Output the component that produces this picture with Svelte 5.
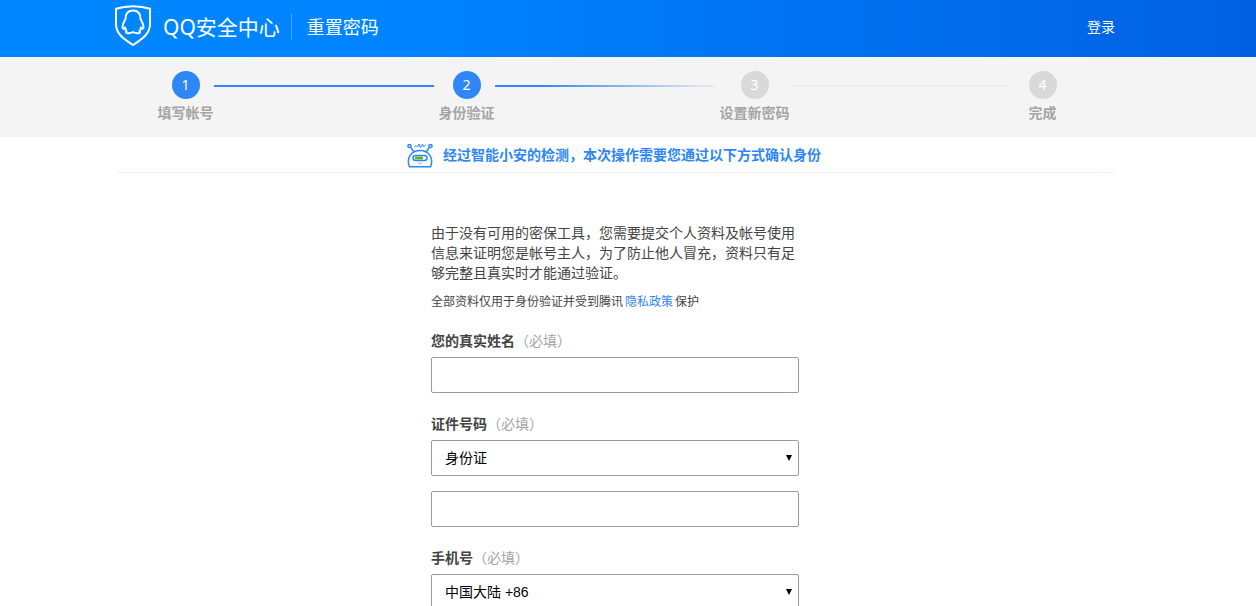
<script>
  const steps = ["填写帐号", "身份验证", "设置新密码", "完成"];
  const current = 2;

  let realName = $state("");
  let idType = $state("id");
  let idNumber = $state("");
  let area = $state("86");
</script>

<header class="header">
  <div class="wrap header-inner">
    <svg class="shield" viewBox="0 0 36 41" aria-hidden="true">
      <path d="M1 3.8C11 0.3 25 0.3 35 3.8V19C35 28 29 33 18 40C7 33 1 28 1 19Z" />
      <path
        d="M10.5 14C10.5 8.500 13.500 5.500 18 5.500S25.500 8.500 25.500 14C27 17 28.500 19 28.500 22C28.500 24 27 24.500 26 22.500C25.800 24 25.200 25 24.500 26C27 28.500 21 29 18 27C15 29 9 28.500 11.500 26C10.800 25 10.200 24 10 22.500C9 24.500 7.500 24 7.500 22C7.500 19 9 17 10.500 14Z"
      />
    </svg>
    <a class="brand" href="#home">QQ安全中心</a>
    <h1 class="title">重置密码</h1>
    <a class="login" href="#login">登录</a>
  </div>
</header>

<div class="progress">
  <ol class="wrap steps">
    {#each steps as step, i}
      <li class="step" class:active={i < current}>
        <span class="num">{i + 1}</span>
        <span>{step}</span>
      </li>
      {#if i < steps.length - 1}
        <li class="line" class:done={i + 1 < current} class:half={i + 1 === current} aria-hidden="true"></li>
      {/if}
    {/each}
  </ol>
</div>

<main class="wrap">
  <h2 class="tip">
    <svg class="robot" viewBox="0 0 26 26" aria-hidden="true">
      <path d="M2.5 24.800C-1 16 4 8.500 13 8.500S27 16 23.500 24.800Z" />
      <path d="M6.500 9.500L4 5.500M19.500 9.500L22 5.500" />
      <path class="hair" d="M7.500 4.500L9 3.500L10.500 5L12 2L13.500 5.500L15.500 2L16.500 4.500L18.500 3.500" />
      <circle cx="2.500" cy="4" r="1.600" />
      <circle cx="23.500" cy="4" r="1.600" />
      <rect x="6" y="13.500" width="14" height="5" rx="2.500" />
      <path class="eyes" d="M8 16H16" />
      <path class="mouth" d="M11 21.500H15" />
    </svg>
    经过智能小安的检测，本次操作需要您通过以下方式确认身份
  </h2>

  <form class="form">
    <p class="intro">
      由于没有可用的密保工具，您需要提交个人资料及帐号使用信息来证明您是帐号主人，为了防止他人冒充，资料只有足够完整且真实时才能通过验证。
    </p>
    <p class="policy">全部资料仅用于身份验证并受到腾讯<a href="#privacy">隐私政策</a>保护</p>

    <div class="field">
      <label for="name">您的真实姓名<span>（必填）</span></label>
      <input id="name" class="control" type="text" bind:value={realName} />
    </div>

    <div class="field">
      <label for="idNumber">证件号码<span>（必填）</span></label>
      <div class="select">
        <select class="control" aria-label="证件类型" bind:value={idType}>
          <option value="id">身份证</option>
        </select>
      </div>
      <input id="idNumber" class="control" type="text" bind:value={idNumber} />
    </div>

    <div class="field">
      <label for="area">手机号<span>（必填）</span></label>
      <div class="select">
        <select id="area" class="control" bind:value={area}>
          <option value="86">中国大陆 +86</option>
        </select>
      </div>
    </div>
  </form>
</main>

<style>
  :global(body) {
    margin: 0;
    background: #fff;
    color: #444;
    font: 14px/20px "Noto Sans", "Noto Sans CJK SC", sans-serif;
  }

  .header,
  .progress {
    padding-right: 26px;
  }

  .wrap {
    max-width: 1000px;
    margin: 0 auto;
  }

  main.wrap {
    padding-right: 26px;
  }

  .header {
    background: linear-gradient(90deg, #0087ff 0%, #0084ff 30%, #0060e2 100%);
  }

  .header-inner {
    display: flex;
    align-items: center;
    height: 53px;
    padding-bottom: 4px;
    color: #fff;
  }

  .header a {
    color: #fff;
    text-decoration: none;
  }

  .shield {
    width: 36px;
    height: 41px;
    margin: 0 12px 2px 0;
    fill: none;
    stroke: #fff;
    stroke-width: 2;
    stroke-linejoin: round;
  }

  .brand {
    font-size: 21px;
    line-height: 26px;
    padding-right: 11px;
    border-right: 1px solid #50acff;
  }

  .title {
    margin: 0 0 0 15px;
    font-size: 18px;
    line-height: 26px;
    font-weight: normal;
  }

  .login {
    margin-left: auto;
  }

  .progress {
    background: #f4f4f4;
  }

  .steps {
    display: flex;
    justify-content: center;
    height: 66px;
    padding: 14px 2px 0 0;
    list-style: none;
  }

  .step {
    display: flex;
    flex-direction: column;
    align-items: center;
    gap: 4px;
    min-width: 56px;
    color: #a5a5a5;
    font-weight: bold;
    white-space: nowrap;
  }

  .num {
    width: 28px;
    border-radius: 50%;
    background: #d9d9d9;
    color: #fff;
    font-weight: normal;
    line-height: 28px;
    text-align: center;
  }

  .active .num {
    background: #2f86f6;
  }

  .line {
    width: 220px;
    height: 2px;
    margin: 14px 5px 0 0;
    background: #ebebeb;
  }

  .line.done {
    background: #2f86f6;
  }

  .line.half {
    background: linear-gradient(90deg, #2f86f6 20%, #ebebeb);
  }

  .tip {
    display: flex;
    align-items: center;
    justify-content: center;
    gap: 10px;
    height: 35px;
    margin: 0;
    padding-right: 2px;
    border-bottom: 1px solid #edf3fb;
    color: #2f86f6;
    font-size: 14px;
  }

  .robot {
    width: 26px;
    height: 26px;
    fill: none;
    stroke: #2f86f6;
    stroke-width: 1.5;
  }

  .robot .hair {
    stroke-width: 1;
  }

  .robot .eyes {
    stroke: #5fb52c;
    stroke-width: 3;
  }

  .robot .mouth {
    stroke: #a5cbfa;
  }

  .form {
    width: 368px;
    margin: 50px auto 0;
  }

  .intro {
    margin: 0;
  }

  .policy {
    margin: 9px 0 19px;
    font-size: 12px;
  }

  .policy a {
    margin: 0 2px;
    color: #2f86f6;
    text-decoration: none;
  }

  .field {
    margin-bottom: 21px;
  }

  label {
    display: block;
    margin-bottom: 6px;
    font-weight: bold;
  }

  label span {
    color: #a5a5a5;
    font-weight: normal;
  }

  .control {
    display: block;
    box-sizing: border-box;
    width: 100%;
    height: 36px;
    padding: 0 13px;
    border: 1px solid #969ba5;
    border-radius: 2px;
    background: #fff;
    color: #000;
    font: 14px "Liberation Sans", "Noto Sans CJK SC", sans-serif;
    appearance: none;
  }

  .control:focus {
    border-color: #2f86f6;
    outline: none;
  }

  .select {
    position: relative;
  }

  .select::after {
    content: "";
    position: absolute;
    top: 15px;
    right: 7px;
    border: 3px solid transparent;
    border-top: 6px solid #000;
    border-bottom: 0;
    pointer-events: none;
  }

  .select + .control {
    margin-top: 15px;
  }
</style>
